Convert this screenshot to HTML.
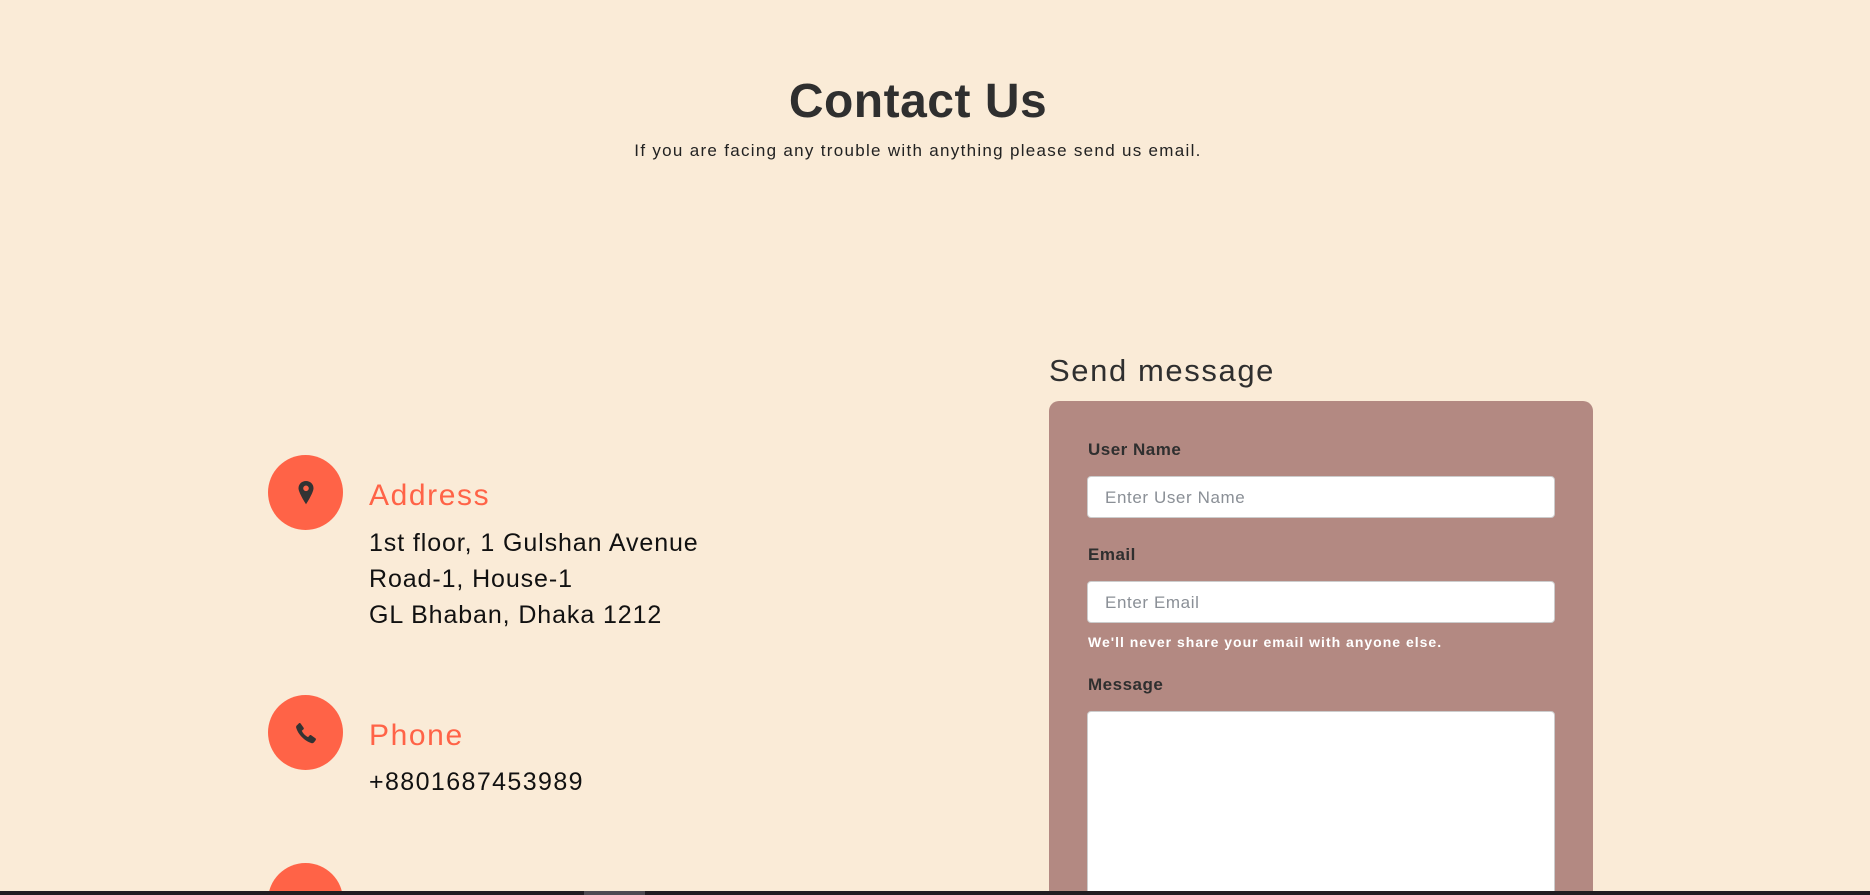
<!DOCTYPE html>
<html><head><meta charset="utf-8"><style>
*{margin:0;padding:0;box-sizing:border-box}
html,body{width:1870px;height:895px;overflow:hidden}
body{background:#faebd7;font-family:"Liberation Sans",sans-serif;position:relative;color:#333}
#w{position:absolute;left:0;top:0;width:1870px;height:895px;overflow:hidden}
.a{position:absolute;white-space:nowrap}
h1{position:absolute;left:0;width:1836px;text-align:center;top:74px;font-size:48px;font-weight:bold;color:#2f2f2f;letter-spacing:0.5px}
.sub{left:0;width:1836px;text-align:center;top:141px;font-size:17px;color:#222;letter-spacing:1.3px}
.circ{position:absolute;left:268px;width:75px;height:75px;border-radius:50%;background:#ff6347;display:flex;align-items:center;justify-content:center}
.tt{left:369px;font-size:30px;color:#ff6347;letter-spacing:1.6px}
.ln{left:369px;font-size:25px;color:#111;line-height:36px;letter-spacing:0.9px}
.form{position:absolute;left:1049px;top:401px;width:544px;height:520px;background:#b38982;border-radius:10px}
.lab{font-size:17px;font-weight:bold;color:#2f2f2f;letter-spacing:0.5px}
.inp{position:absolute;left:1087px;width:468px;height:42px;background:#fff;border:1px solid #ccc;border-radius:4px;font-size:17px;color:#8a8f96;padding:11px 17px;letter-spacing:0.6px}
</style></head><body><div id="w">
<h1>Contact Us</h1>
<div class="a sub">If you are facing any trouble with anything please send us email.</div>

<div class="circ" style="top:455px"><svg width="18" height="26" viewBox="0 0 18 26"><path d="M9 1C4.6 1 1.5 4.2 1.5 8.3c0 4.5 7.5 16 7.5 16s7.5-11.5 7.5-16C16.5 4.2 13.4 1 9 1z" fill="#333"/><circle cx="9" cy="8.3" r="2.8" fill="#ff6347"/></svg></div>
<div class="a tt" style="top:479px">Address</div>
<div class="a ln" style="top:525px">1st floor, 1 Gulshan Avenue<br>Road-1, House-1<br>GL Bhaban, Dhaka 1212</div>

<div class="circ" style="top:695px"><svg width="24" height="24" viewBox="0 0 24 24"><path d="M6.6 2.5l3 4.2c.4.6.3 1.3-.2 1.7L7.8 9.7c1.2 2.7 3.6 5.1 6.3 6.4l1.4-1.6c.4-.5 1.2-.6 1.7-.2l4.2 3c.6.4.7 1.2.3 1.8l-1.6 2.2c-.6.8-1.6 1.100-2.6.8C10.6 20 4.2 13.6 2.2 6.8c-.3-1 0-2 .8-2.6L5 2.2c.5-.4 1.2-.3 1.6.3z" fill="#333"/></svg></div>
<div class="a tt" style="top:719px">Phone</div>
<div class="a ln" style="top:764px;letter-spacing:1.4px">+8801687453989</div>

<div class="circ" style="top:863px"></div>

<div class="a" style="left:1049px;top:353px;font-size:31px;color:#2f2f2f;letter-spacing:1.6px">Send message</div>
<div class="form"></div>
<div class="a lab" style="left:1088px;top:440px">User Name</div>
<div class="inp" style="top:476px">Enter User Name</div>
<div class="a lab" style="left:1088px;top:545px">Email</div>
<div class="inp" style="top:581px">Enter Email</div>
<div class="a" style="left:1088px;top:634px;font-size:14px;font-weight:bold;color:#fff;letter-spacing:1px">We'll never share your email with anyone else.</div>
<div class="a lab" style="left:1088px;top:675px">Message</div>
<div class="inp" style="top:711px;height:220px"></div>

<div class="a" style="left:0;top:891px;width:1870px;height:4px;background:#221c22"></div>
<div class="a" style="left:584px;top:891px;width:61px;height:4px;background:#4f4a52"></div>
</div></body></html>
